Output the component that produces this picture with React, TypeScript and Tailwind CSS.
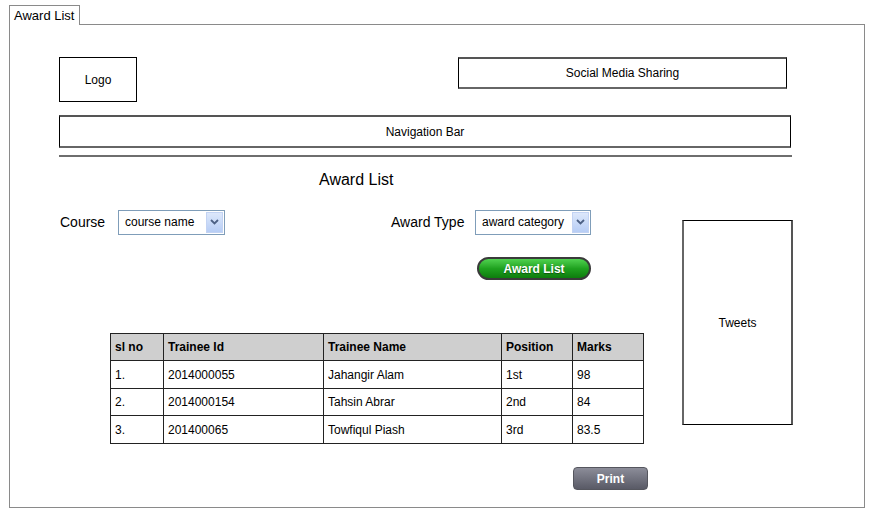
const sketch = "font-['Comic_Sans_MS','Liberation_Sans',sans-serif]";

type Row = { sl: string; id: string; name: string; position: string; marks: string };

const rows: Row[] = [
  { sl: "1.", id: "2014000055", name: "Jahangir Alam", position: "1st", marks: "98" },
  { sl: "2.", id: "2014000154", name: "Tahsin Abrar", position: "2nd", marks: "84" },
  { sl: "3.", id: "201400065", name: "Towfiqul Piash", position: "3rd", marks: "83.5" },
];

function Select({ label, width }: { label: string; width: string }) {
  return (
    <div className={`${width} h-[25px] border border-[#7f9db9] bg-white flex items-center pl-[6px] pr-[1px]`}>
      <span className="flex-1 text-[12px] text-black">{label}</span>
      <div className="w-[17px] h-[21px] bg-gradient-to-b from-[#dde8fb] to-[#b7cdf5] border border-[#c3d3f3] flex items-center justify-center">
        <svg width="9" height="6" viewBox="0 0 9 6">
          <path d="M1 1 L4.5 4.5 L8 1" fill="none" stroke="#4d6185" strokeWidth="1.8" />
        </svg>
      </div>
    </div>
  );
}

export default function App() {
  return (
    <div className="w-[875px] h-[523px] bg-white pt-[4px] pl-[9px] font-['Liberation_Sans',Arial,sans-serif] text-black">
      {/* Tab */}
      <div className="w-[71px] h-[20px] border border-b-0 border-[#8a8a8a] text-[13px] leading-[19px] pl-[4px] relative top-[1px] bg-white">
        Award List
      </div>

      {/* Panel */}
      <div className="w-[856px] h-[484px] border border-[#8a8a8a] pl-[49px] pt-[32px]">
        <div className="flex items-start">
          <div className={`${sketch} w-[78px] h-[45px] border border-black flex items-center justify-center text-[12px]`}>
            Logo
          </div>
          <div className={`${sketch} ml-[321px] w-[329px] h-[32px] border border-black border-t-2 border-b-2 border-t-[#555] border-b-[#666] flex items-center justify-center text-[12px]`}>
            Social Media Sharing
          </div>
        </div>

        <div className={`${sketch} mt-[13px] w-[732px] h-[33px] border border-black border-t-2 border-t-[#555] border-b-2 border-b-[#666] flex items-center justify-center text-[12px]`}>
          Navigation Bar
        </div>

        <div className="mt-[7px] w-[733px] h-[2px] bg-[#6e6e6e]" />

        <div className="mt-[14px] ml-[260px] text-[16px] leading-[18px]">Award List</div>

        <div className="flex mt-[20px]">
          <div className="w-[623px]">
            <div className="flex items-center h-[26px]">
              <span className="text-[14px] w-[59px] pl-[1px]">Course</span>
              <Select label="course name" width="w-[107px]" />
              <span className="text-[14px] ml-[166px] w-[84px]">Award Type</span>
              <Select label="award category" width="w-[116px]" />
            </div>

            <div className="mt-[22px] ml-[418px] w-[114px] h-[23px] rounded-full border-2 border-[#3a3a3a] bg-gradient-to-b from-[#4fd24f] via-[#1fa21f] to-[#0d7d0d] flex items-center justify-center text-white text-[12px] font-bold [text-shadow:0_1px_1px_rgba(0,0,0,0.4)]">
              Award List
            </div>

            <table className={`${sketch} mt-[53px] ml-[51px] border-collapse text-[12px] w-[534px]`}>
              <thead>
                <tr className="h-[27px] bg-[#cfcfcf]">
                  <th className="border border-[#222] w-[53px] text-left pl-[4px] font-bold">sl no</th>
                  <th className="border border-[#222] w-[160px] text-left pl-[4px] font-bold">Trainee Id</th>
                  <th className="border border-[#222] w-[178px] text-left pl-[4px] font-bold">Trainee Name</th>
                  <th className="border border-[#222] w-[71px] text-left pl-[4px] font-bold">Position</th>
                  <th className="border border-[#222] w-[71px] text-left pl-[4px] font-bold">Marks</th>
                </tr>
              </thead>
              <tbody>
                {rows.map((r, i) => (
                  <tr key={r.sl} className={i === 1 ? "h-[27px]" : "h-[28px]"}>
                    <td className="border border-[#222] pl-[4px]">{r.sl}</td>
                    <td className="border border-[#222] pl-[4px]">{r.id}</td>
                    <td className="border border-[#222] pl-[4px]">{r.name}</td>
                    <td className="border border-[#222] pl-[4px]">{r.position}</td>
                    <td className="border border-[#222] pl-[4px]">{r.marks}</td>
                  </tr>
                ))}
              </tbody>
            </table>

            <div className="mt-[23px] ml-[514px] w-[75px] h-[23px] rounded-[4px] border border-[#55565e] bg-gradient-to-b from-[#8c8d99] to-[#595a66] flex items-center justify-center text-white text-[12px] font-bold">
              Print
            </div>
          </div>

          <div className={`${sketch} mt-[11px] w-[111px] h-[205px] border border-black border-l-2 border-l-[#666] border-r-2 border-r-[#555] flex items-center justify-center text-[12px]`}>
            Tweets
          </div>
        </div>
      </div>
    </div>
  );
}
